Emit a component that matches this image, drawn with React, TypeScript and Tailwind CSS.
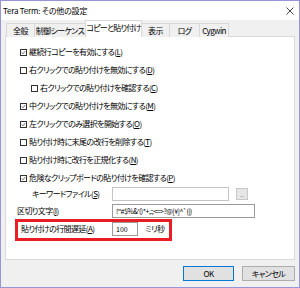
import React from 'react';

const jp = "font-['Noto_Sans_CJK_JP','Noto_Sans',sans-serif] [font-feature-settings:'palt']";

const Check: React.FC<{ checked?: boolean }> = ({ checked }) => (
    <span className="w-[7px] h-[7px] border border-[#333] bg-white flex items-center justify-center shrink-0">
        {checked && (
            <svg width="7" height="7" viewBox="0 0 7 7" className="block">
                <path d="M1 3.6 L2.6 5.2 L6 1.6" fill="none" stroke="#222" strokeWidth="1" />
            </svg>
        )}
    </span>
);

const Label: React.FC<{ text: string; k: string }> = ({ text, k }) => (
    <span className="whitespace-nowrap">
        {text}(<span className="underline">{k}</span>)
    </span>
);

const rows = [
    { text: '継続行コピーを有効にする', k: 'L', checked: true, indent: false },
    { text: '右クリックでの貼り付けを無効にする', k: 'D', checked: false, indent: false },
    { text: '右クリックでの貼り付けを確認する', k: 'C', checked: false, indent: true },
    { text: '中クリックでの貼り付けを無効にする', k: 'M', checked: true, indent: false },
    { text: '左クリックでのみ選択を開始する', k: 'O', checked: true, indent: false },
    { text: '貼り付け時に末尾の改行を削除する', k: 'T', checked: false, indent: false },
    { text: '貼り付け時に改行を正規化する', k: 'N', checked: false, indent: false },
    { text: '危険なクリップボードの貼り付けを確認する', k: 'P', checked: true, indent: false },
];

const tabs = ['全般', '制御シーケンス', 'コピーと貼り付け', '表示', 'ログ', 'Cygwin'];
const tabW = [29, 52, 57, 29, 31, 30];

export default function App() {
    return (
        <div className={`w-[300px] h-[288px] border border-[#9595d8] bg-[#f0f0f0] flex flex-col text-[8px] tracking-[-0.6px] leading-none text-black ${jp}`}>
            <div className="h-[19px] bg-white flex items-center justify-between pl-[2px] pr-[5px] shrink-0">
                <span className="tracking-[-0.2px]">Tera Term: その他の設定</span>
                <svg width="8" height="8" viewBox="0 0 8 8">
                    <path d="M0.5 0.5 L7.5 7.5 M7.5 0.5 L0.5 7.5" stroke="#333" strokeWidth="0.9" />
                </svg>
            </div>

            <div className="px-[4px]">
                <div className="flex items-end h-[17px] pl-[1px]">
                    {tabs.map((t, i) =>
                        i === 2 ? (
                            <div
                                key={t}
                                style={{ width: tabW[i] }}
                                className="h-[17px] pb-[2px] bg-white border border-b-0 border-[#d9d9d9] flex items-center justify-center whitespace-nowrap tracking-[-0.8px] relative z-10 -mx-[1px]"
                            >
                                {t}
                            </div>
                        ) : (
                            <div
                                key={t}
                                style={{ width: tabW[i] }}
                                className={`h-[14px] bg-[#f0f0f0] border border-b-0 border-[#d9d9d9] flex items-center justify-center whitespace-nowrap ${i > 0 && i !== 3 ? '-ml-px' : ''}`}
                            >
                                {t}
                            </div>
                        )
                    )}
                </div>

                <div className="w-[290px] h-[224px] bg-white border border-[#d9d9d9] -mt-px pt-[6px]">
                    {rows.map((r) => (
                        <div
                            key={r.k}
                            className={`h-[18px] flex items-center gap-[2px] ${r.indent ? 'pl-[25px]' : 'pl-[14px]'}`}
                        >
                            <Check checked={r.checked} />
                            <Label text={r.text} k={r.k} />
                        </div>
                    ))}

                    <div className="h-[14px] flex items-center">
                        <span className="w-[106px] pl-[26px] whitespace-nowrap">
                            <Label text="キーワードファイル" k="S" />
                        </span>
                        <div className="w-[117px] h-[14px] border border-[#c4c4c4] bg-white" />
                        <div className="ml-[7px] w-[12px] h-[12px] border border-[#c8c8c8] bg-[#e6e6e6] flex items-center justify-center text-[7px] tracking-normal text-[#8a8a8a]">
                            ..
                        </div>
                    </div>

                    <div className="h-[14px] flex items-center mt-[3px]">
                        <span className="w-[106px] pl-[11px] whitespace-nowrap">
                            <Label text="区切り文字" k="I" />
                        </span>
                        <div className="w-[143px] h-[14px] border border-[#9a9a9a] bg-white flex items-center pl-[3px] text-[7px] tracking-[-0.5px] whitespace-nowrap overflow-hidden">
                            {'!"#$%&\'()*+,:;<=>?@[¥]^`{|}'}
                        </div>
                    </div>

                    <div className="relative h-[14px] flex items-center mt-[4px]">
                        <span className="w-[106px] pl-[15px] whitespace-nowrap">
                            <Label text="貼り付けの行間遅延" k="A" />
                        </span>
                        <div className="w-[26px] h-[14px] border border-[#9a9a9a] bg-white flex items-center pl-[3px] text-[7px] tracking-normal">
                            100
                        </div>
                        <span className="ml-[7px]">ミリ秒</span>
                        <div className="absolute left-[9px] -top-[3px] w-[157px] h-[22px] border-[3px] border-[#ec1c24]" />
                    </div>
                </div>
            </div>

            <div className="flex justify-end gap-[8px] pr-[4px] mt-[6px]">
                <button className="w-[51px] h-[15px] bg-[#e1e1e1] border border-[#0078d7] flex items-center justify-center">
                    OK
                </button>
                <button className="w-[53px] h-[15px] bg-[#e1e1e1] border border-[#adadad] flex items-center justify-center">
                    キャンセル
                </button>
            </div>
        </div>
    );
}
